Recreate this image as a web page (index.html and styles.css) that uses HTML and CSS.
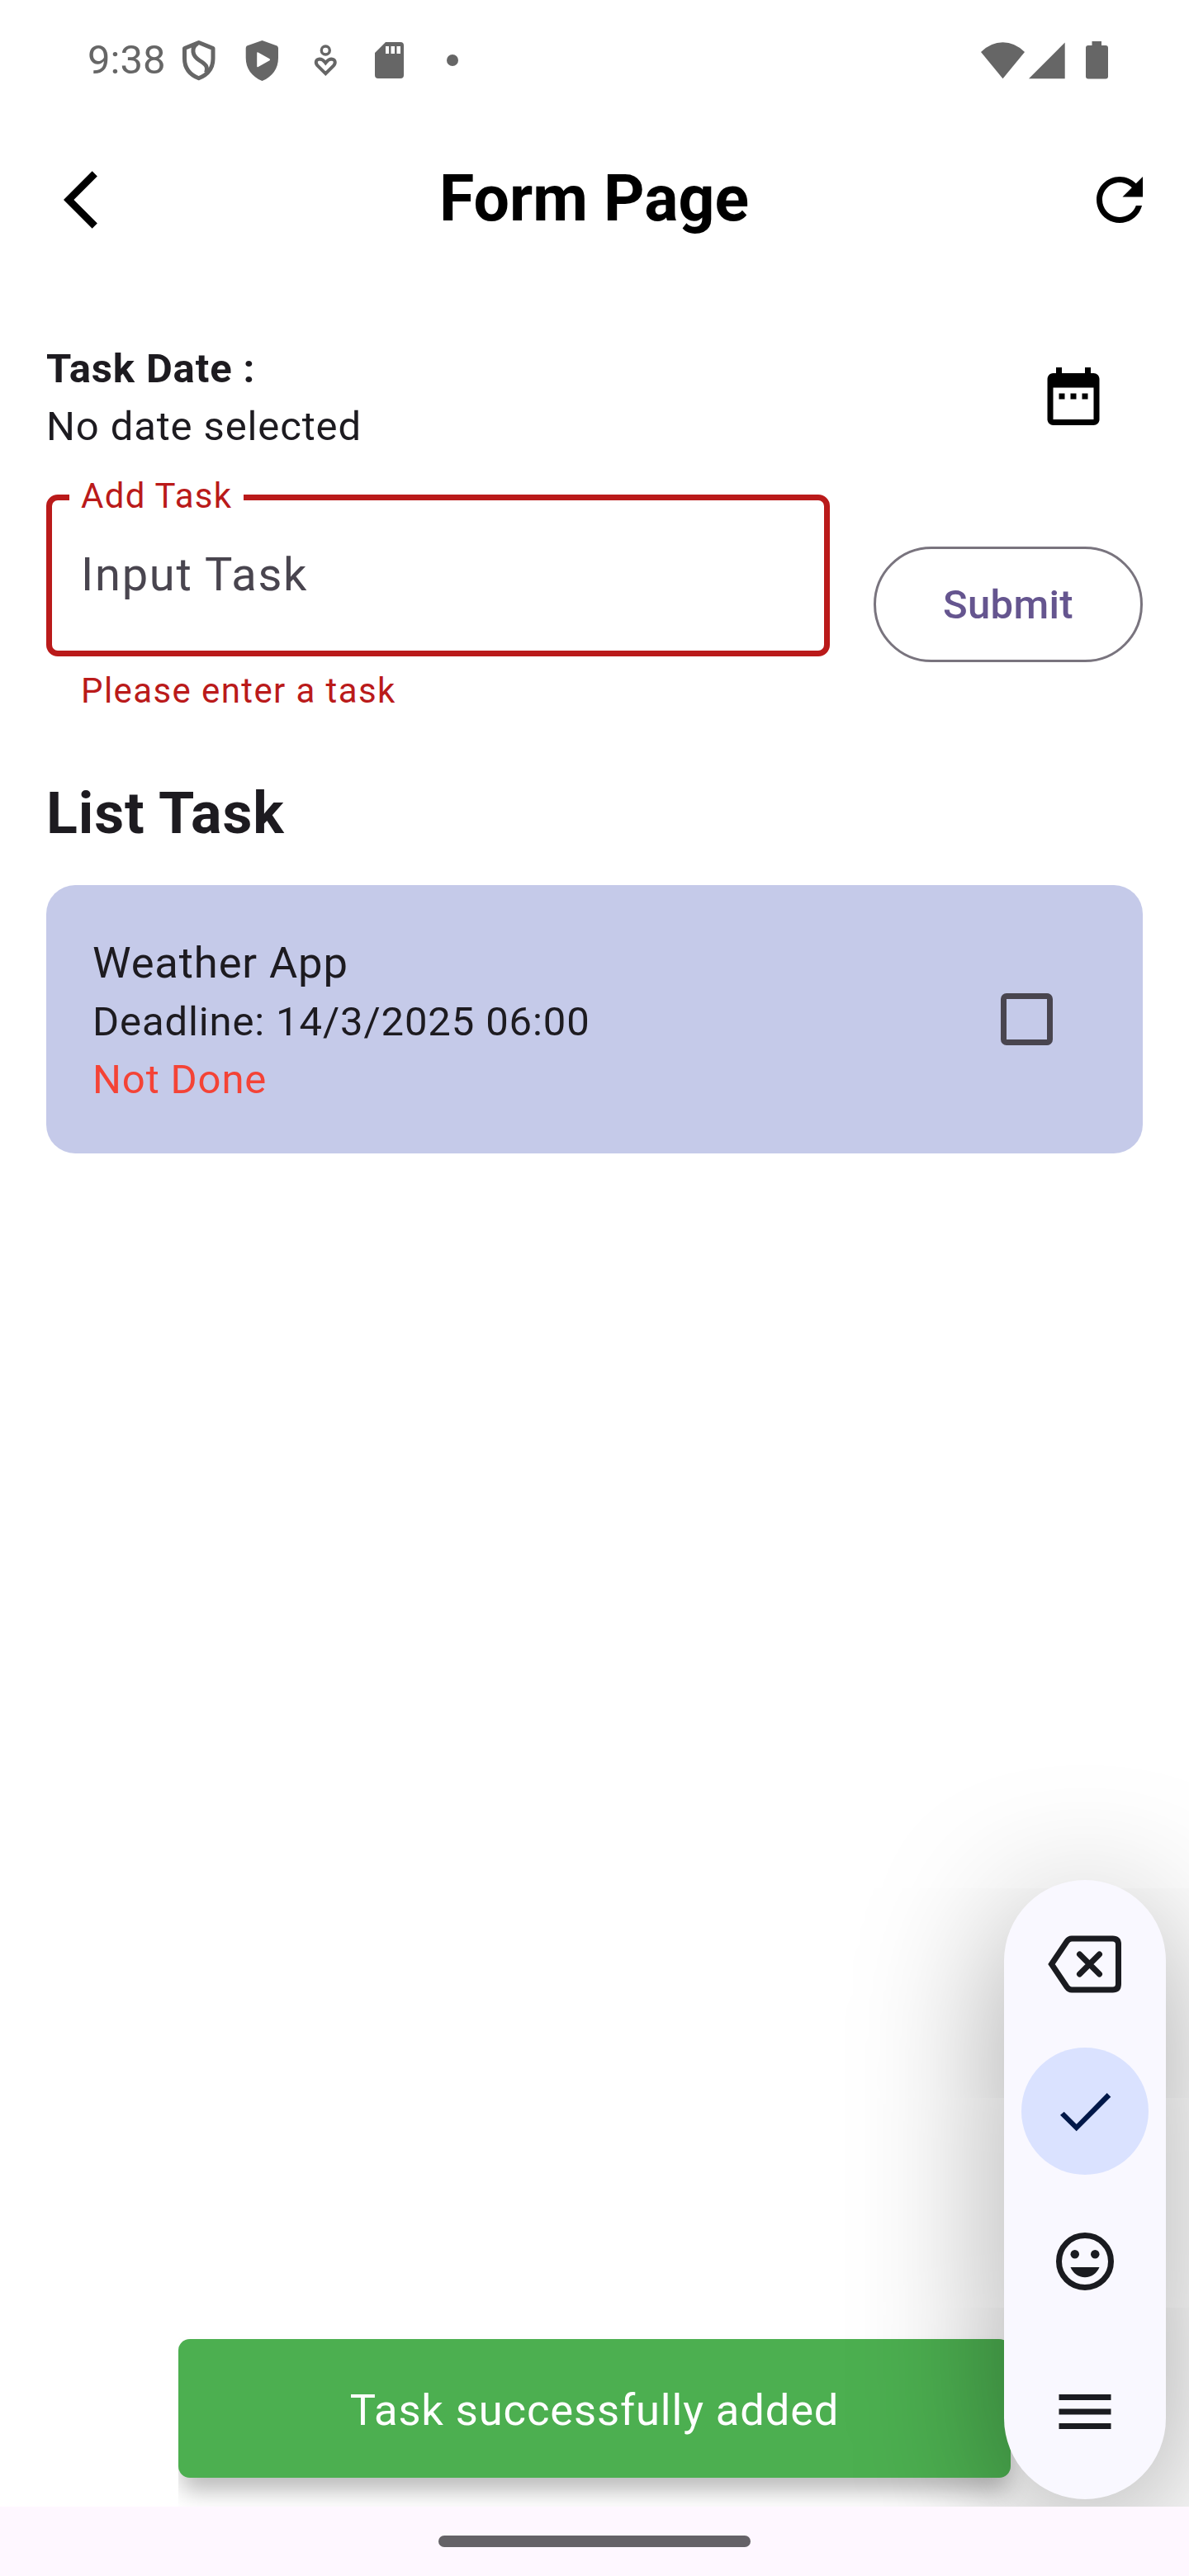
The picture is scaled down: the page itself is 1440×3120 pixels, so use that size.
FILE: index.html
```html
<!DOCTYPE html>
<html lang="en">
<head>
<meta charset="utf-8">
<title>Form Page</title>
<link rel="stylesheet" href="styles.css">
</head>
<body>
<div class="screen">
  <header class="status">
    <span class="clock">9:38</span>
    <svg class="status-left" width="350" height="60" viewBox="215 43 350 60" fill="#666">
      <path d="M240.700 51.500L223.500 58.500V71C223.500 82.500 230 90.500 240.700 94.800C251.500 90.500 258 82.500 258 71V58.500Z" fill="none" stroke="#666" stroke-width="5" stroke-linejoin="round"/>
      <path d="M239.500 52.500C234.500 55 233.500 59 234 63C234.700 68.500 238 71 242 73.500C248.500 77.500 252.500 80.500 249.500 88" fill="none" stroke="#666" stroke-width="5"/>
      <path fill-rule="evenodd" d="M317.500 49L335.500 55.500Q337 56.500 337 58.500V70C337 83 330 93 317.500 98C305 93 297.700 83 297.700 70V58.500Q297.700 56.500 299 55.500ZM312.700 63.500Q311.200 62.700 311.200 64.500V80Q311.200 82 312.700 81L326.500 73.300Q327.800 72.300 326.500 71.300Z"/>
      <circle cx="394.300" cy="61" r="5" fill="none" stroke="#666" stroke-width="3.400"/>
      <path d="M394.300 89.200L384.500 79.500C381.500 76 382.500 71.800 387 71.500C391 71.500 392.500 74 394.300 76.300C396.100 74 397.500 71.500 401.500 71.500C406 71.800 407 76 404.100 79.500Z" fill="none" stroke="#666" stroke-width="4"/>
      <path fill-rule="evenodd" d="M467 51H485Q489 51 489 55V91Q489 95 485 95H458Q454 95 454 91V64ZM467 56V65H471V56ZM473.500 56V65H478V56ZM480.500 56V65H485V56Z"/>
      <circle cx="548" cy="73" r="7"/>
    </svg>
    <svg class="status-right" width="160" height="50" viewBox="1186 47 160 50" fill="#666">
      <path d="M1188 62Q1200 50.300 1214.500 50.300T1241 62L1214.500 94.300Z"/>
      <path d="M1246 94.300L1289.700 50.500V94.300Z"/>
      <path d="M1322.500 49H1334V54H1339Q1342 54 1342 57V91.500Q1342 94.500 1339 94.500H1318Q1315 94.500 1315 91.500V57Q1315 54 1318 54H1322.500Z"/>
    </svg>
  </header>

  <div class="app-bar">
    <svg class="icon" viewBox="0 0 24 24"><path d="M11.670 3.870L9.900 2.100 0 12l9.900 9.900 1.770-1.770L3.540 12z"/></svg>
    <h1 class="title">Form Page</h1>
    <svg class="icon" viewBox="0 0 24 24"><path d="M17.650 6.350C16.200 4.900 14.210 4 12 4c-4.420 0-7.990 3.580-7.990 8s3.570 8 7.990 8c3.730 0 6.840-2.550 7.730-6h-2.080c-.82 2.330-3.040 4-5.650 4-3.310 0-6-2.690-6-6s2.690-6 6-6c1.660 0 3.140.69 4.220 1.780L13 11h7V4l-2.350 2.350z"/></svg>
  </div>

  <main class="content">
    <section class="date-row">
      <div>
        <p class="body strong">Task Date :</p>
        <p class="body">No date selected</p>
      </div>
      <svg class="icon" viewBox="0 0 24 24"><path d="M9 11H7v2h2v-2zm4 0h-2v2h2v-2zm4 0h-2v2h2v-2zm2-7h-1V2h-2v2H8V2H6v2H5c-1.110 0-1.990.9-1.990 2L3 20c0 1.100.89 2 2 2h14c1.100 0 2-.9 2-2V6c0-1.100-.9-2-2-2zm0 16H5V9h14v11z"/></svg>
    </section>

    <section class="form-row">
      <div class="field">
        <div class="field-box">
          <span class="label">Add Task</span>
          <span class="hint">Input Task</span>
        </div>
        <p class="error">Please enter a task</p>
      </div>
      <button class="submit">Submit</button>
    </section>

    <h2 class="list-title">List Task</h2>
    <article class="card">
      <div>
        <p class="task">Weather App</p>
        <p class="body">Deadline: 14/3/2025 06:00</p>
        <p class="body pending">Not Done</p>
      </div>
      <span class="checkbox"></span>
    </article>
  </main>

  <div class="snackbar">Task successfully added</div>

  <aside class="toolbar">
    <div class="tool erase">
      <svg width="92" height="84" viewBox="0 0 92 84" fill="none" stroke="#1a1b20" stroke-width="7">
        <path d="M5.500 42L24 14.500Q26.500 11 30 11H79.500Q86.500 11 86.500 18V66Q86.500 73 79.500 73H30Q26.500 73 24 69.500Z"/>
        <path d="M39.500 30L63.500 54M63.500 30L39.500 54" stroke-linecap="round"/>
      </svg>
    </div>
    <div class="tool active">
      <svg width="84" height="84" viewBox="0 0 84 84" fill="#001849"><path d="M12 46.700L16.700 42.700L31.700 57.700L68.700 20L73.300 24.700L31.700 66.300Z"/></svg>
    </div>
    <div class="tool">
      <svg width="84" height="84" viewBox="0 0 24 24" fill="#1a1b20">
        <circle cx="12" cy="12" r="9" fill="none" stroke="#1a1b20" stroke-width="2"/>
        <circle cx="8.500" cy="9.500" r="1.500"/><circle cx="15.500" cy="9.500" r="1.500"/>
        <path d="M7 14h10c-.8 2-2.700 3.500-5 3.500S7.800 16 7 14z"/>
      </svg>
    </div>
    <div class="tool">
      <svg width="84" height="84" viewBox="0 0 24 24" fill="#1a1b20"><path d="M3 6h18v2H3zM3 11h18v2H3zM3 16h18v2H3z"/></svg>
    </div>
  </aside>

  <footer class="nav"><span class="handle"></span></footer>
</div>
</body>
</html>
```

FILE: styles.css
```css
* { box-sizing: border-box; margin: 0; padding: 0; }

body { background: #fff; font-family: Roboto, "Liberation Sans", sans-serif; color: #1d1b20; }

.screen {
  position: relative;
  display: flex;
  flex-direction: column;
  width: 1440px;
  height: 3120px;
  overflow: hidden;
  background: #fff;
}

.status { display: flex; align-items: center; height: 146px; padding: 0 94px 0 106px; }
.clock { width: 109px; font-size: 49px; line-height: 58px; color: #666; }
.status-left { display: block; }
.status-right { display: block; margin-left: auto; }

.app-bar {
  display: flex;
  align-items: center;
  justify-content: space-between;
  height: 192px;
  padding: 0 42px 0 77px;
}
.title { padding: 0 36px 3px 0; font-size: 77px; line-height: 98px; font-weight: 700; color: #000; }
.icon { display: block; width: 84px; height: 84px; fill: #000; }

.content { flex: 1; padding: 73px 56px 0; }
.body { font-size: 49px; line-height: 70px; letter-spacing: 0.875px; }
.strong { font-weight: 700; }
.date-row { display: flex; justify-content: space-between; height: 188px; padding: 1px 42px 0 0; }
.date-row .icon { margin-top: 26px; }

.form-row { display: flex; justify-content: space-between; align-items: flex-start; height: 336px; }
.field { width: 949px; }
.field-box {
  position: relative;
  display: flex;
  align-items: center;
  height: 196px;
  padding: 0 0 3px 35px;
  border: 7px solid #ba1a1a;
  border-radius: 14px;
}
.label {
  position: absolute;
  left: 21px;
  top: -30px;
  width: 211px;
  padding-left: 14px;
  background: #fff;
  color: #ba1a1a;
  font-size: 42px;
  line-height: 50px;
  letter-spacing: 1.3125px;
  white-space: nowrap;
}
.hint { font-size: 56px; line-height: 84px; letter-spacing: 1.75px; color: #49454f; }
.error {
  padding: 14px 0 0 42px;
  color: #ba1a1a;
  font-size: 42px;
  line-height: 56px;
  letter-spacing: 1.4px;
}
.submit {
  width: 326px;
  height: 140px;
  margin-top: 63px;
  padding-top: 2px;
  border: 3.5px solid #79747e;
  border-radius: 70px;
  background: none;
  color: #65558f;
  font: 500 49px/70px Roboto, "Liberation Sans", sans-serif;
  letter-spacing: 0.35px;
}

.list-title { height: 137px; font-size: 70px; line-height: 100px; letter-spacing: 0.875px; font-weight: 700; }
.card {
  display: flex;
  justify-content: space-between;
  align-items: center;
  height: 325px;
  padding: 0 109px 0 56px;
  border-radius: 35px;
  background: #c5cae9;
}
.task { padding-top: 2px; font-size: 52.5px; line-height: 74px; letter-spacing: 0.875px; }
.pending { color: #f44336; }
.checkbox { width: 63px; height: 63px; border: 7px solid #49454f; border-radius: 7px; }

.snackbar {
  position: absolute;
  left: 216px;
  top: 2833px;
  width: 1008px;
  height: 168px;
  border-radius: 14px;
  background: #4caf50;
  color: #fff;
  font-size: 52.5px;
  line-height: 173px;
  letter-spacing: 0.875px;
  text-align: center;
  box-shadow: 0 20px 28px -4px rgba(0, 0, 0, 0.27);
  clip-path: inset(-20px -60px -60px 0);
}

.toolbar {
  position: absolute;
  left: 1216px;
  top: 2277px;
  width: 196px;
  height: 750px;
  padding: 21px;
  border-radius: 98px;
  background: #f9f8ff;
  box-shadow: 0 36px 175px rgba(0, 0, 0, 0.37);
  display: flex;
  flex-direction: column;
  gap: 28px;
}
.tool { display: flex; align-items: center; justify-content: center; height: 154px; border-radius: 77px; }
.erase { padding-top: 8px; }
.active { background: #dae2ff; }

.nav {
  position: relative;
  display: flex;
  justify-content: center;
  height: 84px;
  padding-top: 35px;
  background: #fef7ff;
}
.handle { width: 378px; height: 14px; border-radius: 7px; background: #656267; }
```
